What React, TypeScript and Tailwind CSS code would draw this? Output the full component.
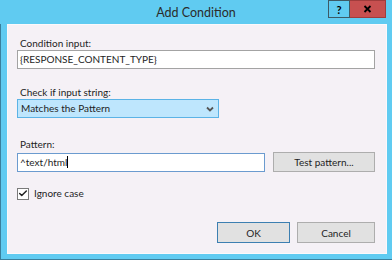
import { Check } from 'lucide-react';

export default function App() {
  return (
    <div
      className="w-[392px] h-[260px] bg-[#60cbf1] flex flex-col text-[10px] text-[#1e1e1e] overflow-hidden"
      style={{ fontFamily: 'Lato, "Open Sans", sans-serif' }}
    >
      {/* Title bar */}
      <div className="h-[24px] shrink-0 flex">
        <div className="w-[328px] flex items-center justify-center pl-[64px]">
          <span className="text-[12.5px] text-[#2b2b2b] leading-none pt-[2px]">Add Condition</span>
        </div>
        <div className="w-[22px] h-[18px] border border-[#3d5a66] bg-[#60cbf1] flex items-center justify-center text-[11px] font-bold text-black leading-none">
          ?
        </div>
        <div className="w-[36px] h-[18px] bg-[#c75050] border border-[#a03c3c] border-l-0 flex items-center justify-center">
          <svg width="9" height="8" viewBox="0 0 9 8">
            <path d="M1.5 1 L7.5 7 M7.5 1 L1.5 7" stroke="#000" strokeWidth="1.8" />
          </svg>
        </div>
      </div>

      {/* Body */}
      <div className="flex-1 flex border-l border-[#3a7f9c] border-b border-b-[#3a7f9c] pl-[6px] pr-[7px] pb-[5px]">
        <div className="flex-1 bg-[#f5f1f6] border border-[#fbf9fb] flex flex-col pl-[9px] pr-[11px]">
          <div className="pt-[12px] leading-[12px] pl-[3px]">Condition input:</div>
          <div className="mt-[1px] h-[19px] bg-white border border-[#a3a3a3] flex items-center px-[2px]">
            {'{RESPONSE_CONTENT_TYPE}'}
          </div>

          <div className="mt-[17px] leading-[12px] pl-[3px]">Check if input string:</div>
          <div className="mt-[1px] w-[202px] h-[19px] bg-[#bee6fd] border border-[#5bb3e6] flex items-center justify-between pl-[3px] pr-[4px]">
            <span>Matches the Pattern</span>
            <svg width="8" height="6" viewBox="0 0 8 6">
              <path d="M1 1.5 L4 4.5 L7 1.5" stroke="#555" strokeWidth="1.8" fill="none" />
            </svg>
          </div>

          <div className="mt-[20px] leading-[12px] pl-[3px]">Pattern:</div>
          <div className="mt-[2px] flex items-center gap-[8px]">
            <div className="w-[248px] h-[19px] bg-white border border-[#6b9bcf] flex items-center px-[2px]">
              <span>^text/html</span>
              <span className="w-px h-[12px] bg-black" />
            </div>
            <button className="w-[102px] h-[20px] bg-[#e1e1e1] border border-[#adadad] text-[10px] text-[#1e1e1e] leading-none">
              Test pattern...
            </button>
          </div>

          <div className="mt-[14px] flex items-center gap-[5px]">
            <div className="w-[12px] h-[12px] border border-[#7a7a7a] bg-white flex items-center justify-center">
              <Check size={11} strokeWidth={3.5} className="text-[#222]" />
            </div>
            <span>Ignore case</span>
          </div>

          <div className="flex-1" />
          <div className="flex justify-end gap-[7px] pb-[10px]">
            <button className="w-[73px] h-[21px] bg-[#e1e1e1] border border-[#3c7fb1] text-[10px] leading-none">
              OK
            </button>
            <button className="w-[78px] h-[21px] bg-[#e1e1e1] border border-[#adadad] text-[10px] leading-none">
              Cancel
            </button>
          </div>
        </div>
      </div>
    </div>
  );
}
